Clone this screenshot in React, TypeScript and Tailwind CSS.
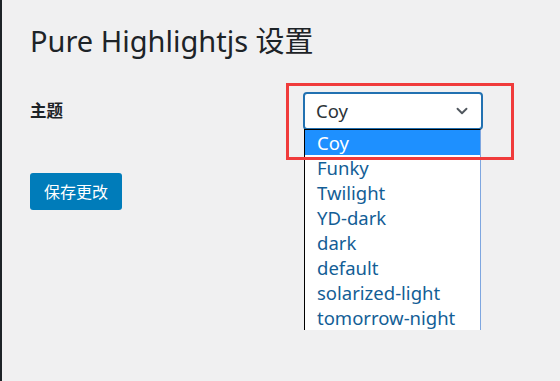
import { ChevronDown } from 'lucide-react';

const themes = ['Coy', 'Funky', 'Twilight', 'YD-dark', 'dark', 'default', 'solarized-light', 'tomorrow-night'];

export default function App() {
  return (
    <div
      className="relative h-[381px] w-[560px] overflow-hidden bg-[#f0f0f1] border-l-2 border-[#1d2327] text-[#1d2327]"
      style={{ fontFamily: '"Noto Sans", "Noto Sans CJK SC", sans-serif' }}
    >
      <div className="pl-[28px] pt-[21px]">
        <h1 className="text-[29px] leading-[40px] font-normal">Pure Highlightjs 设置</h1>

        <div className="mt-[31px] flex items-center h-[38px]">
          <div className="w-[273px] text-[16.5px] font-bold">主题</div>
          <div className="relative">
            <div className="flex items-center justify-between w-[180px] h-[38px] bg-white border-2 border-[#2271b1] rounded-[4px] pl-[11px] pr-[10px]">
              <span className="text-[18.5px] text-[#2c3338]">Coy</span>
              <ChevronDown className="w-[18px] h-[18px] text-[#50575e]" strokeWidth={2.5} />
            </div>
            <ul className="absolute left-[1px] top-[37px] w-[177px] bg-white border-l border-t border-black border-r border-r-[#7ea6e0] z-10">
              {themes.map((t, i) => (
                <li
                  key={t}
                  className={`h-[25px] leading-[25px] pl-[12px] text-[18.5px] ${
                    i === 0 ? 'bg-[#1e90ff] text-white' : 'text-[#135e96]'
                  }`}
                >
                  {t}
                </li>
              ))}
            </ul>
          </div>
        </div>

        <button className="mt-[43px] h-[37px] px-[14px] bg-[#007cba] rounded-[3px] text-white text-[16px]">
          保存更改
        </button>
      </div>

      <div className="absolute left-[284px] top-[83px] w-[228px] h-[77px] border-[3px] border-[#f03b3b] pointer-events-none z-20" />
    </div>
  );
}
